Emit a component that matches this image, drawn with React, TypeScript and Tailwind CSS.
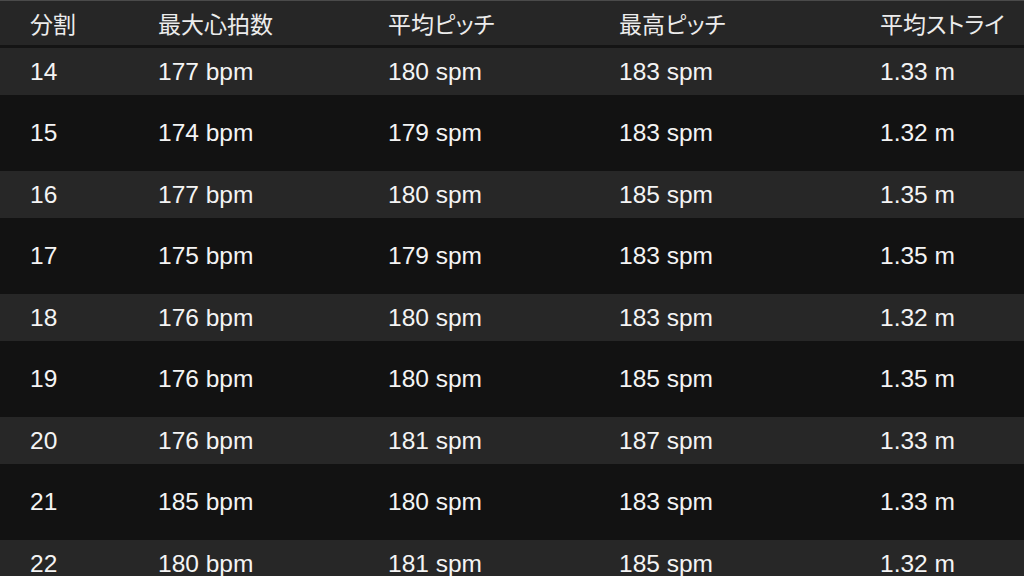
const splits = [
  { n: 14, hr: 177, cad: 180, maxCad: 183, stride: "1.33" },
  { n: 15, hr: 174, cad: 179, maxCad: 183, stride: "1.32" },
  { n: 16, hr: 177, cad: 180, maxCad: 185, stride: "1.35" },
  { n: 17, hr: 175, cad: 179, maxCad: 183, stride: "1.35" },
  { n: 18, hr: 176, cad: 180, maxCad: 183, stride: "1.32" },
  { n: 19, hr: 176, cad: 180, maxCad: 185, stride: "1.35" },
  { n: 20, hr: 176, cad: 181, maxCad: 187, stride: "1.33" },
  { n: 21, hr: 185, cad: 180, maxCad: 183, stride: "1.33" },
  { n: 22, hr: 180, cad: 181, maxCad: 185, stride: "1.32" },
];

const cols = "grid grid-cols-[128px_230px_231px_261px_1fr] items-center pl-[30px]";

export default function App() {
  return (
    <div className="w-[1024px] h-[576px] overflow-hidden bg-[#121212] text-[#f4f4f4] font-['Liberation_Sans','Noto_Sans_CJK_JP',sans-serif]">
      {/* Header */}
      <div
        className={`${cols} h-[48px] bg-[#262626] border-t border-[#4a4a4a] border-b-[3px] border-b-[#141414] text-[23px] text-[#ececec] whitespace-nowrap font-['Noto_Sans_CJK_JP',sans-serif] [font-feature-settings:'palt']`}
      >
        <span>分割</span>
        <span>最大心拍数</span>
        <span>平均ピッチ</span>
        <span>最高ピッチ</span>
        <span>平均ストライ</span>
      </div>

      {splits.map((s, i) => (
        <div
          key={s.n}
          className={`${cols} pt-px text-[24.5px] whitespace-nowrap ${
            i % 2 === 0 ? "h-[47px] bg-[#272727]" : "h-[76px] bg-[#121212]"
          }`}
        >
          <span>{s.n}</span>
          <span>{s.hr} bpm</span>
          <span>{s.cad} spm</span>
          <span>{s.maxCad} spm</span>
          <span>{s.stride} m</span>
        </div>
      ))}
    </div>
  );
}
